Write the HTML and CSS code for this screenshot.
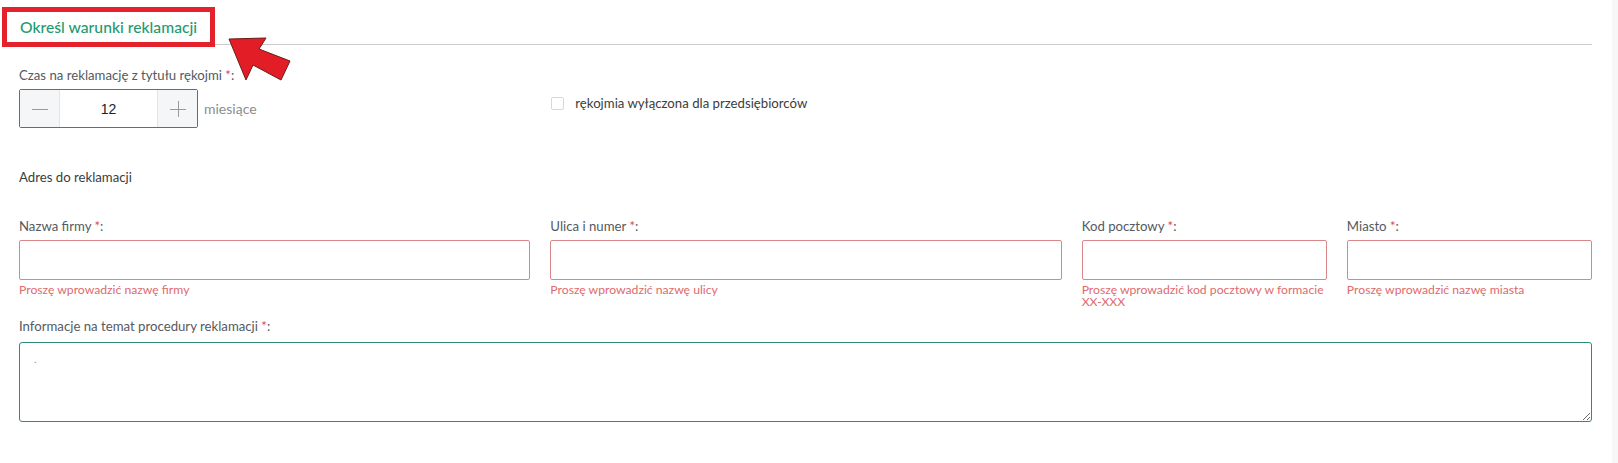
FILE: index.html
```html
<!DOCTYPE html>
<html lang="pl">
<head>
<meta charset="utf-8">
<title>Określ warunki reklamacji</title>
<link rel="stylesheet" href="styles.css">
</head>
<body>
<div class="shell">
  <main class="page">
    <header class="section-head">
      <h2 class="section-title">Określ warunki reklamacji</h2>
      <svg class="arrow" width="74" height="52" viewBox="0 0 74 52" aria-hidden="true">
        <polygon points="4,4 41,3 34,14 65,26 56,45 28,30 21,45" fill="#e31d25" stroke="#6b1c1c" stroke-width="1" stroke-linejoin="round"/>
      </svg>
    </header>

    <div class="grid row-top">
      <div class="cell">
        <div class="label">Czas na reklamację z tytułu rękojmi <span class="req">*</span>:</div>
        <div class="stepper-row">
          <div class="stepper">
            <div class="step-btn">
              <svg width="16" height="16" viewBox="0 0 16 16"><line x1="0" y1="8.5" x2="16" y2="8.5" stroke="#9a9a9a" stroke-width="1"/></svg>
            </div>
            <div class="step-val">12</div>
            <div class="step-btn">
              <svg width="16" height="16" viewBox="0 0 16 16"><line x1="0" y1="8.5" x2="16" y2="8.5" stroke="#9a9a9a" stroke-width="1"/><line x1="8.5" y1="0" x2="8.5" y2="16" stroke="#9a9a9a" stroke-width="1"/></svg>
            </div>
          </div>
          <span class="unit">miesiące</span>
        </div>
      </div>
      <div class="cell">
        <label class="check">
          <span class="box"></span>
          <span class="check-text">rękojmia wyłączona dla przedsiębiorców</span>
        </label>
      </div>
    </div>

    <div class="subhead">Adres do reklamacji</div>

    <div class="grid row-fields">
      <div class="field">
        <div class="label">Nazwa firmy <span class="req">*</span>:</div>
        <div class="input error"></div>
        <div class="err">Proszę wprowadzić nazwę firmy</div>
      </div>
      <div class="field">
        <div class="label">Ulica i numer <span class="req">*</span>:</div>
        <div class="input error"></div>
        <div class="err">Proszę wprowadzić nazwę ulicy</div>
      </div>
      <div class="field">
        <div class="label">Kod pocztowy <span class="req">*</span>:</div>
        <div class="input error"></div>
        <div class="err">Proszę wprowadzić kod pocztowy w formacie XX-XXX</div>
      </div>
      <div class="field">
        <div class="label">Miasto <span class="req">*</span>:</div>
        <div class="input error"></div>
        <div class="err">Proszę wprowadzić nazwę miasta</div>
      </div>
    </div>

    <div class="label info-label">Informacje na temat procedury reklamacji <span class="req">*</span>:</div>
    <textarea class="area">.</textarea>
  </main>
  <aside class="scroll-strip"></aside>
</div>
</body>
</html>
```

FILE: styles.css
```css
html, body {
  margin: 0;
  padding: 0;
  background: #ffffff;
}

body {
  font-family: "Lato", "Liberation Sans", sans-serif;
  color: #555a5f;
}

.shell {
  display: flex;
  min-height: 463px;
}

.page {
  flex: 1;
  padding: 0 20px 0 19px;
}

.scroll-strip {
  width: 6px;
  background: #f7f7f7;
}

.section-head {
  position: relative;
  display: flex;
  padding-top: 7px;
  border-bottom: 1px solid #cccccc;
  height: 37px;
}

.section-title {
  position: relative;
  margin: 0 0 -3px -17px;
  height: 30px;
  padding: 0 13px 0 13px;
  border: 5px solid #e3222b;
  background: #ffffff;
  font-size: 15.7px;
  font-weight: 500;
  color: #1f9a70;
  line-height: 30px;
}

.arrow {
  position: absolute;
  left: 206px;
  top: 35px;
  overflow: visible;
}

.grid {
  display: grid;
  grid-template-columns: 511fr 511fr 245fr 245fr;
  column-gap: 20px;
}

.label {
  font-size: 13.2px;
  line-height: 16px;
  color: #555a5f;
}

.req {
  color: #e0474c;
}

.row-top {
  margin-top: 22px;
}

.stepper-row {
  display: flex;
  align-items: center;
  margin-top: 6px;
}

.stepper {
  display: flex;
  height: 37px;
  border: 1px solid #2b8b6c;
  border-radius: 2px;
}

.step-btn {
  width: 39px;
  background: #f5f6f8;
  display: flex;
  align-items: center;
  justify-content: center;
}

.step-val {
  width: 97px;
  border-left: 1px solid #e3e4e6;
  border-right: 1px solid #e3e4e6;
  display: flex;
  align-items: center;
  justify-content: center;
  font-family: "Liberation Sans", sans-serif;
  font-size: 14px;
  color: #222222;
}

.unit {
  margin-left: 6px;
  font-size: 14px;
  color: #8a8d91;
}

.check {
  display: flex;
  align-items: center;
  margin-top: 28px;
  margin-left: 1px;
}

.box {
  width: 11px;
  height: 11px;
  border: 1px solid #d8d8d8;
  border-radius: 2px;
  background: #ffffff;
}

.check-text {
  margin-left: 11px;
  font-size: 13.2px;
  color: #3a3d40;
}

.subhead {
  margin-top: 41px;
  font-size: 13.2px;
  line-height: 16px;
  color: #3a3d40;
}

.row-fields {
  margin-top: 33px;
}

.field .label {
  margin-bottom: 6px;
}

.input {
  height: 38px;
  border: 1px solid #d9878a;
  border-radius: 2px;
  background: #ffffff;
}

.err {
  margin-top: 4px;
  font-size: 12.2px;
  line-height: 12px;
  color: #e06a6c;
}

.info-label {
  margin-top: 10px;
}

.area {
  display: block;
  box-sizing: border-box;
  width: 100%;
  height: 80px;
  margin-top: 8px;
  padding: 10px 14px;
  border: 1px solid #2f8b75;
  border-radius: 3px;
  font-family: "Lato", sans-serif;
  font-size: 10px;
  color: #888888;
  resize: vertical;
}
```
